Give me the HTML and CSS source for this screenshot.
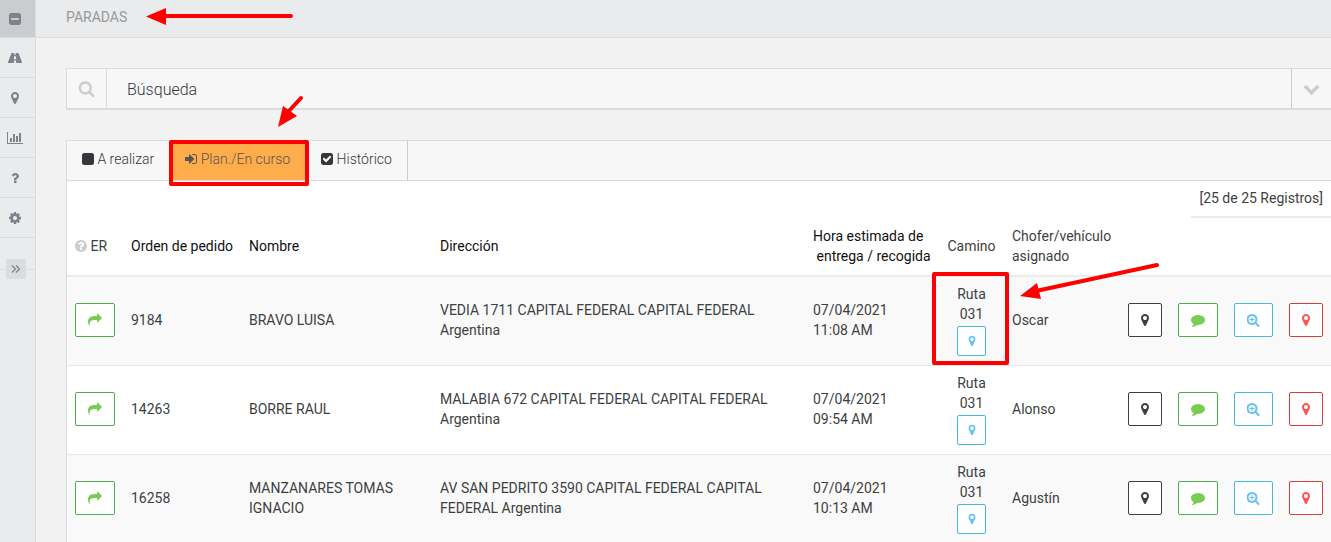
FILE: index.html
```html
<!DOCTYPE html>
<html lang="es">
<head>
	<meta charset="utf-8">
	<meta name="viewport" content="width=device-width, initial-scale=1">
	<title>Paradas</title>
	<link rel="stylesheet" href="styles.css">
</head>
<body>
	<!-- icons -->
	<svg class="sprite" aria-hidden="true">
		<symbol id="minus-square" viewBox="128 128 1536 1536"><path d="M1408 960v-128q0-26-19-45t-45-19h-896q-26 0-45 19t-19 45v128q0 26 19 45t45 19h896q26 0 45-19t19-45zm256-544v960q0 119-84.5 203.5t-203.5 84.5h-960q-119 0-203.5-84.5t-84.5-203.5v-960q0-119 84.5-203.5t203.5-84.5h960q119 0 203.5 84.5t84.5 203.5z"/></symbol>
		<symbol id="road" viewBox="0 0 1792 1792"><path fill-rule="evenodd" d="M500 256h310l-16 224h204l-16-224h310q45 0 62 44l420 1060q66 176-20 176h-702l-26-320h-260l-26 320h-702q-86 0-20-176l420-1060q17-44 62-44zM780 660l-28 390h288l-28-390z"/></symbol>
		<symbol id="marker" viewBox="0 0 1792 1792"><path d="M1152 640q0-106-75-181t-181-75-181 75-75 181 75 181 181 75 181-75 75-181zm256 0q0 109-33 179l-364 774q-16 33-47.5 52t-67.5 19-67.5-19-46.5-52l-365-774q-33-70-33-179 0-212 150-362t362-150 362 150 150 362z"/></symbol>
		<symbol id="chart" viewBox="0 0 2048 1792"><path d="M640 896v512h-256v-512h256zm384-512v1024h-256v-1024h256zm1024 1152v128h-2048v-1536h128v1408h1920zm-640-896v768h-256v-768h256zm384-384v1152h-256v-1152h256z"/></symbol>
		<symbol id="question" viewBox="0 0 1792 1792"><path d="M1088 1256v240q0 16-12 28t-28 12h-240q-16 0-28-12t-12-28v-240q0-16 12-28t28-12h240q16 0 28 12t12 28zm316-600q0 54-15.5 101t-35 76.5-55 59.5-57.5 43.5-61 35.5q-41 23-68.5 65t-27.5 67q0 17-12 32.5t-28 15.5h-240q-15 0-25.5-18.5t-10.5-37.5v-45q0-83 65-156.5t143-108.5q59-27 84-56t25-76q0-42-46.5-74t-107.5-32q-65 0-108 29-35 25-107 115-13 16-31 16-12 0-25-8l-164-125q-13-10-15.5-25t5.5-28q160-266 464-266 80 0 161 31t146 83 106 127.5 41 158.5z"/></symbol>
		<symbol id="cog" viewBox="128 128 1536 1536"><path d="M1152 896q0-106-75-181t-181-75-181 75-75 181 75 181 181 75 181-75 75-181zm512-109v222q0 12-8 23t-20 13l-185 28q-19 54-39 91 35 50 107 138 10 12 10 25t-9 23q-27 37-99 108t-94 71q-12 0-26-9l-138-108q-44 23-91 38-16 136-29 186-7 28-36 28h-222q-14 0-24.5-8.5t-11.5-21.5l-28-184q-49-16-90-37l-141 107q-10 9-25 9-14 0-25-11-126-114-165-168-7-10-7-23 0-12 8-23 15-21 51-66.5t54-70.5q-27-50-41-99l-183-27q-13-2-21-12.5t-8-23.5v-222q0-12 8-23t19-13l186-28q14-46 39-92-40-57-107-138-10-12-10-24 0-10 9-23 26-36 98.5-107.5t94.5-71.5q13 0 26 10l138 107q44-23 91-38 16-136 29-186 7-28 36-28h222q14 0 24.5 8.5t11.5 21.5l28 184q49 16 90 37l142-107q9-9 24-9 13 0 25 10 129 119 165 170 7 8 7 22 0 12-8 23-15 21-51 66.5t-54 70.5q26 50 41 98l183 28q13 2 21 12.5t8 23.5z"/></symbol>
		<symbol id="angles" viewBox="0 0 14 14"><path d="M3 3.500L6.500 7 3 10.500M7 3.500L10.500 7 7 10.500" fill="none" stroke="currentColor" stroke-width="1.200"/></symbol>
		<symbol id="search" viewBox="0 0 1792 1792"><path d="M1216 832q0-185-131.500-316.500t-316.500-131.500-316.500 131.500-131.500 316.500 131.500 316.500 316.500 131.500 316.500-131.500 131.500-316.500zm512 832q0 52-38 90t-90 38q-54 0-90-38l-343-342q-179 124-399 124-143 0-273.500-55.500t-225-150-150-225-55.500-273.500 55.500-273.500 150-225 225-150 273.500-55.500 273.500 55.500 225 150 150 225 55.500 273.500q0 220-124 399l343 343q37 37 37 90z"/></symbol>
		<symbol id="search-plus" viewBox="128 128 1664 1664"><path d="M1088 800v64q0 13-9.500 22.500t-22.500 9.500h-224v224q0 13-9.500 22.500t-22.500 9.500h-64q-13 0-22.500-9.500t-9.500-22.500v-224h-224q-13 0-22.500-9.500t-9.500-22.500v-64q0-13 9.500-22.500t22.500-9.500h224v-224q0-13 9.500-22.500t22.500-9.500h64q13 0 22.500 9.500t9.500 22.500v224h224q13 0 22.500 9.500t9.500 22.500zm128 32q0-185-131.500-316.500t-316.500-131.500-316.500 131.500-131.500 316.500 131.500 316.500 316.500 131.500 316.500-131.500 131.500-316.500zm512 832q0 53-37.500 90.500t-90.500 37.500q-54 0-90-38l-343-342q-179 124-399 124-143 0-273.500-55.500t-225-150-150-225-55.500-273.500 55.500-273.500 150-225 225-150 273.500-55.500 273.500 55.500 225 150 150 225 55.500 273.500q0 220-124 399l343 343q37 37 37 90z"/></symbol>
		<symbol id="chevron" viewBox="0 0 1792 1792"><path d="M1683 808l-742 741q-19 19-45 19t-45-19l-742-741q-19-19-19-45.500t19-45.500l166-165q19-19 45-19t45 19l531 531 531-531q19-19 45-19t45 19l166 165q19 19 19 45.500t-19 45.500z"/></symbol>
		<symbol id="square" viewBox="128 128 1536 1536"><path d="M1664 416v960q0 119-84.5 203.5t-203.5 84.5h-960q-119 0-203.5-84.5t-84.5-203.5v-960q0-119 84.5-203.5t203.5-84.5h960q119 0 203.5 84.5t84.5 203.5z"/></symbol>
		<symbol id="check-square" viewBox="128 128 1536 1536"><path d="M813 1299l614-614q19-19 19-45t-19-45l-102-102q-19-19-45-19t-45 19l-467 467-211-211q-19-19-45-19t-45 19l-102 102q-19 19-19 45t19 45l358 358q19 19 45 19t45-19zm851-883v960q0 119-84.5 203.5t-203.5 84.5h-960q-119 0-203.5-84.5t-84.5-203.5v-960q0-119 84.5-203.5t203.5-84.5h960q119 0 203.5 84.5t84.5 203.5z"/></symbol>
		<symbol id="sign-in" viewBox="128 128 1536 1536"><path d="M1312 896q0 26-19 45l-544 544q-19 19-45 19t-45-19-19-45v-288h-448q-26 0-45-19t-19-45v-384q0-26 19-45t45-19h448v-288q0-26 19-45t45-19 45 19l544 544q19 19 19 45zm352-352v704q0 119-84.5 203.5t-203.5 84.5h-320q-13 0-22.5-9.5t-9.5-22.5q0-4-1-20t-.5-26.5 3-23.5 10-19.5 20.5-6.5h320q66 0 113-47t47-113v-704q0-66-47-113t-113-47h-312l-11.5-1-11.5-3-8-5.5-7-9-2-13.5q0-4-1-20t-.5-26.5 3-23.5 10-19.5 20.5-6.5h320q119 0 203.5 84.5t84.5 203.5z"/></symbol>
		<symbol id="help" viewBox="128 128 1536 1536"><path d="M1024 1376v-192q0-14-9-23t-23-9h-192q-14 0-23 9t-9 23v192q0 14 9 23t23 9h192q14 0 23-9t9-23zm256-672q0-88-55.5-163t-138.5-116-170-41q-243 0-371 213-15 24 8 42l132 100q7 6 19 6 16 0 25-12 53-68 86-92 34-24 86-24 48 0 85.5 26t37.5 59q0 38-20 61t-68 45q-63 28-115.5 86.5t-52.5 125.5v36q0 14 9 23t23 9h192q14 0 23-9t9-23q0-19 21.5-49.5t54.5-49.5q32-18 49-28.5t46-35 44.5-48 28-60.5 12.5-81zm384 192q0 209-103 385.5t-279.5 279.5-385.5 103-385.5-103-279.5-279.5-103-385.5 103-385.5 279.5-279.5 385.5-103 385.5 103 279.5 279.5 103 385.5z"/></symbol>
		<symbol id="share" viewBox="0 0 1792 1792"><path d="M1792 640q0 26-19 45l-512 512q-19 19-45 19t-45-19-19-45v-256h-224q-98 0-175.5 6t-154 21.5-133 42.5-105.5 69.5-80 101-48.5 138.5-17.5 181q0 55 5 123 0 6 2.5 23.5t2.5 26.5q0 15-8.5 25t-23.5 10q-16 0-28-17-7-9-13-22t-13.5-30-10.5-24q-127-285-127-451 0-199 53-333 162-403 875-403h224v-256q0-26 19-45t45-19 45 19l512 512q19 19 19 45z"/></symbol>
		<symbol id="comment" viewBox="0 0 1792 1792"><path d="M1792 896q0 174-120 321.5t-326 233-450 85.5q-70 0-145-8-198 175-460 242-49 14-114 22-17 2-30.5-9t-17.5-29v-1q-3-4-.5-12t2-10 4.5-9.5l6-9 7-8.5 8-9q7-8 31-34.5t34.5-38 31-39.5 32.5-51 27-59 26-76q-157-89-247.5-220t-90.5-281q0-130 71-248.5t191-204.5 286-136.5 348-50.5q244 0 450 85.5t326 233 120 321.5z"/></symbol>
	</svg>

	<nav class="sidebar">
		<a class="active" href="#" aria-label="Paradas"><svg class="icon box"><use href="#minus-square"/></svg></a>
		<a href="#" aria-label="Rutas"><svg class="icon"><use href="#road"/></svg></a>
		<a href="#" aria-label="Mapa"><svg class="icon"><use href="#marker"/></svg></a>
		<a href="#" aria-label="Informes"><svg class="icon wide"><use href="#chart"/></svg></a>
		<a href="#" aria-label="Ayuda"><svg class="icon"><use href="#question"/></svg></a>
		<a href="#" aria-label="Configuración"><svg class="icon box"><use href="#cog"/></svg></a>
		<div class="toggle">
			<button type="button" aria-label="Expandir menú"><svg class="icon"><use href="#angles"/></svg></button>
		</div>
	</nav>

	<div class="page">
		<header class="topbar"><h1>PARADAS</h1></header>
		<main>
			<div class="search">
				<label for="busqueda" aria-label="Búsqueda"><svg class="icon big"><use href="#search"/></svg></label>
				<input type="text" id="busqueda" placeholder="Búsqueda">
				<button type="button" aria-label="Más filtros"><svg class="icon big"><use href="#chevron"/></svg></button>
			</div>

			<section class="card">
				<div class="tabs">
					<button type="button"><svg class="icon box"><use href="#square"/></svg> A realizar</button>
					<button type="button" class="current"><svg class="icon box"><use href="#sign-in"/></svg> Plan./En curso</button>
					<button type="button"><svg class="icon box"><use href="#check-square"/></svg> Histórico</button>
				</div>
				<p class="count"><span>[25 de 25 Registros]</span></p>
				<table>
					<colgroup>
						<col class="c-er"><col class="c-order"><col class="c-name"><col><col class="c-time"><col class="c-route"><col class="c-driver"><col class="c-pin"><col class="c-msg"><col class="c-zoom"><col class="c-pin">
					</colgroup>
					<thead>
						<tr>
							<th class="soft"><svg class="icon box help"><use href="#help"/></svg> ER</th>
							<th>Orden de pedido</th>
							<th>Nombre</th>
							<th>Dirección</th>
							<th>Hora estimada de<br>&nbsp;entrega / recogida</th>
							<th class="soft route">Camino</th>
							<th class="soft">Chofer/vehículo asignado</th>
							<th colspan="4"></th>
						</tr>
					</thead>
					<tbody>
						<tr>
							<td><button type="button" class="btn green" aria-label="Reenviar"><svg class="icon"><use href="#share"/></svg></button></td>
							<td>9184</td>
							<td>BRAVO LUISA</td>
							<td>VEDIA 1711 CAPITAL FEDERAL CAPITAL FEDERAL Argentina</td>
							<td>07/04/2021<br>11:08 AM</td>
							<td class="route">Ruta<br>031<button type="button" class="btn small blue" aria-label="Ver ruta"><svg class="icon"><use href="#marker"/></svg></button></td>
							<td>Oscar</td>
							<td><button type="button" class="btn dark" aria-label="Ubicación"><svg class="icon"><use href="#marker"/></svg></button></td>
							<td><button type="button" class="btn green" aria-label="Comentario"><svg class="icon"><use href="#comment"/></svg></button></td>
							<td><button type="button" class="btn blue" aria-label="Detalle"><svg class="icon zoom"><use href="#search-plus"/></svg></button></td>
							<td><button type="button" class="btn red" aria-label="Quitar"><svg class="icon"><use href="#marker"/></svg></button></td>
						</tr>
						<tr>
							<td><button type="button" class="btn green" aria-label="Reenviar"><svg class="icon"><use href="#share"/></svg></button></td>
							<td>14263</td>
							<td>BORRE RAUL</td>
							<td>MALABIA 672 CAPITAL FEDERAL CAPITAL FEDERAL Argentina</td>
							<td>07/04/2021<br>09:54 AM</td>
							<td class="route">Ruta<br>031<button type="button" class="btn small blue" aria-label="Ver ruta"><svg class="icon"><use href="#marker"/></svg></button></td>
							<td>Alonso</td>
							<td><button type="button" class="btn dark" aria-label="Ubicación"><svg class="icon"><use href="#marker"/></svg></button></td>
							<td><button type="button" class="btn green" aria-label="Comentario"><svg class="icon"><use href="#comment"/></svg></button></td>
							<td><button type="button" class="btn blue" aria-label="Detalle"><svg class="icon zoom"><use href="#search-plus"/></svg></button></td>
							<td><button type="button" class="btn red" aria-label="Quitar"><svg class="icon"><use href="#marker"/></svg></button></td>
						</tr>
						<tr>
							<td><button type="button" class="btn green" aria-label="Reenviar"><svg class="icon"><use href="#share"/></svg></button></td>
							<td>16258</td>
							<td>MANZANARES TOMAS IGNACIO</td>
							<td>AV SAN PEDRITO 3590 CAPITAL FEDERAL CAPITAL FEDERAL Argentina</td>
							<td>07/04/2021<br>10:13 AM</td>
							<td class="route">Ruta<br>031<button type="button" class="btn small blue" aria-label="Ver ruta"><svg class="icon"><use href="#marker"/></svg></button></td>
							<td>Agustín</td>
							<td><button type="button" class="btn dark" aria-label="Ubicación"><svg class="icon"><use href="#marker"/></svg></button></td>
							<td><button type="button" class="btn green" aria-label="Comentario"><svg class="icon"><use href="#comment"/></svg></button></td>
							<td><button type="button" class="btn blue" aria-label="Detalle"><svg class="icon zoom"><use href="#search-plus"/></svg></button></td>
							<td><button type="button" class="btn red" aria-label="Quitar"><svg class="icon"><use href="#marker"/></svg></button></td>
						</tr>
					</tbody>
				</table>
			</section>
		</main>
	</div>

	<!-- red marks over the page -->
	<svg class="marks" viewBox="0 0 1331 542" aria-hidden="true">
		<g fill="none" stroke="#f00" stroke-width="4" stroke-linejoin="round" stroke-linecap="round">
			<path d="M291 16H164M301 98L288 112M1157 265L1036 291"/>
			<rect x="171" y="142" width="136" height="42"/>
			<rect x="934" y="274" width="73" height="89"/>
		</g>
		<path fill="#f00" d="M146 16.500L166 8v17zM278 127l5-21 14 10zM1020 296l17-13 4 16z"/>
	</svg>
</body>
</html>
```
FILE: styles.css
```css
*{
	box-sizing: border-box;
}
body{
	margin: 0;
	display: flex;
	height: 100vh;
	overflow: hidden;
	background-color: #f2f2f2;
	color: #3d3f42;
	font: 14px/20px Roboto, sans-serif;
}
button,input{
	font: inherit;
	color: inherit;
	margin: 0;
	padding: 0;
	border: 0;
	background: none;
}
.sprite{
	display: none;
}
.icon{
	width: 14px;
	height: 14px;
	fill: currentColor;
	vertical-align: -2px;
}
.icon.wide{
	width: 16px;
}
.icon.box{
	width: 12px;
	height: 12px;
	vertical-align: -1px;
}
.icon.zoom{
	width: 13px;
	height: 13px;
}
.icon.big{
	width: 17px;
	height: 17px;
}

/* sidebar */
.sidebar{
	flex: none;
	width: 36px;
	background-color: #e9ebec;
	border-right: 1px solid #d9dde0;
	color: #7c838d;
}
.sidebar a{
	display: flex;
	align-items: center;
	justify-content: center;
	height: 40px;
	padding-right: 5px;
	border-bottom: 1px solid #d9dde0;
	color: inherit;
}
.sidebar a.active{
	height: 38px;
	background-color: #c9cdd0;
}
.toggle{
	display: flex;
	justify-content: center;
	margin-top: 21px;
	padding-right: 4px;
	background: linear-gradient(#d9dde0, #d9dde0) 0 10px / 100% 1px no-repeat;
}
.toggle button{
	display: flex;
	align-items: center;
	justify-content: center;
	width: 20px;
	height: 20px;
	background-color: #d9dde0;
}

/* page */
.page{
	flex: 1;
	min-width: 0;
}
.topbar{
	height: 38px;
	padding: 7px 30px;
	background-color: #e9ebec;
	border-bottom: 1px solid #d9dde0;
}
.topbar h1{
	margin: 0;
	color: #999;
	font-size: 14px;
	font-weight: 400;
}
main{
	padding: 30px 0 0 30px;
}
.search{
	display: flex;
	height: 42px;
	margin-bottom: 30px;
	background-color: #f7f7f7;
	border: 1px solid #d9dde0;
	border-bottom-width: 2px;
	border-right: 0;
	color: #c9cdd0;
}
.search label,.search button{
	display: flex;
	align-items: center;
	justify-content: center;
	width: 40px;
}
.search label{
	border-right: 1px solid #d9dde0;
}
.search button{
	border-left: 1px solid #c9cdd0;
}
.search input{
	flex: 1;
	min-width: 0;
	padding: 2px 20px 0;
	color: #34383c;
	font-size: 16px;
	font-weight: 300;
}
.search input::placeholder{
	color: inherit;
	opacity: 1;
}
.card{
	background-color: #fff;
	border: 1px solid #d9dde0;
	border-right: 0;
}
.tabs{
	display: flex;
	height: 40px;
	background-color: #f7f7f7;
	border-bottom: 1px solid #d9dde0;
}
.tabs button{
	padding: 0 15px 3px;
	border-right: 1px solid #c9cdd0;
	color: #34383c;
	font-weight: 300;
}
.tabs .current{
	background-color: #ffac4a;
	color: #555;
}
.count{
	display: flex;
	justify-content: flex-end;
	margin: 0;
}
.count span{
	padding: 7px 8px 8px;
	border-bottom: 2px solid #e9ebec;
}

/* stops table */
table{
	width: 100%;
	table-layout: fixed;
	border-collapse: separate;
	border-spacing: 0;
}
.c-er{ width: 56px; }
.c-order{ width: 118px; }
.c-name{ width: 191px; }
.c-time{ width: 134px; }
.c-route{ width: 65px; }
.c-driver{ width: 116px; }
.c-pin{ width: 50px; }
.c-msg{ width: 56px; }
.c-zoom{ width: 55px; }
th,td{
	padding: 8px;
	text-align: left;
	vertical-align: middle;
}
td{
	padding-top: 7px;
	padding-bottom: 9px;
	border-bottom: 1px solid #e5e7e8;
}
th{
	padding-bottom: 9px;
	border-bottom: 2px solid #e9ebec;
	color: #111;
	font-weight: 400;
	white-space: nowrap;
}
th.soft{
	color: #3d3f42;
	white-space: normal;
}
.help{
	color: #ccc;
}
tbody tr:nth-child(odd){
	background-color: #f9f9f9;
}
.route{
	text-align: center;
}
.btn{
	display: flex;
	align-items: center;
	justify-content: center;
	height: 34px;
	padding: 0 12px;
	background-color: #fff;
	border: 1px solid;
	border-radius: 2px;
}
td .btn.dark,td .btn.red{
	padding: 0 9px;
}
.btn.small{
	width: 29px;
	height: 30px;
	margin: 2px auto 0;
	padding: 0;
}
.btn.small .icon{
	width: 12px;
	height: 12px;
}
.green{
	color: #78cd51;
	border-color: #4cae4c;
}
.blue{
	color: #67c2ef;
	border-color: #46b8da;
}
.red{
	color: #ff5454;
	border-color: #d43f3a;
}
.dark{
	color: #3d3f42;
	border-color: #3d3f42;
}
.marks{
	position: absolute;
	top: 0;
	left: 0;
	width: 1331px;
	height: 542px;
	pointer-events: none;
}
```
